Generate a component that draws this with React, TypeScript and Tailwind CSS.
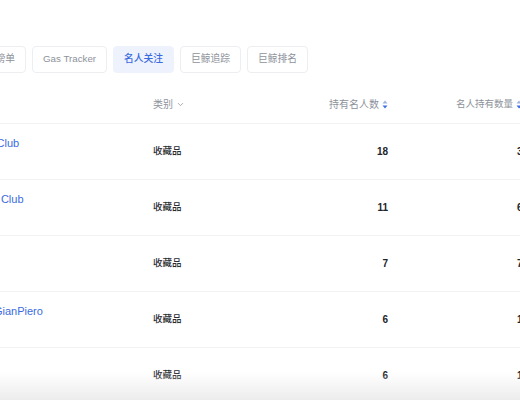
import { ChevronDown } from 'lucide-react';

const FONT = { fontFamily: '"Liberation Sans", "Noto Sans CJK SC", sans-serif' };

const tabs = [
  { label: '热门榜单', active: false },
  { label: 'Gas Tracker', active: false },
  { label: '名人关注', active: true },
  { label: '巨鲸追踪', active: false },
  { label: '巨鲸排名', active: false },
];

const rows = [
  { name: 'Bored Ape Yacht Club', sub: 'BAYC', category: '收藏品', holders: 18, amount: 35 },
  { name: 'Mutant Ape Yacht Club', sub: 'MAYC', category: '收藏品', holders: 11, amount: 62 },
  { name: 'Azuki', sub: 'AZUKI', category: '收藏品', holders: 7, amount: 71 },
  { name: 'Gutter Punks by GianPiero', sub: 'GP', category: '收藏品', holders: 6, amount: 14 },
  { name: 'Doodles', sub: 'DOODLE', category: '收藏品', holders: 6, amount: 12 },
];

function SortIcon() {
  return (
    <svg width="6" height="9" viewBox="0 0 6 9" className="ml-[3px] shrink-0">
      <path d="M3 0.5 L5.5 3.5 L0.5 3.5 Z" fill="#9fb2e4" />
      <path d="M3 8.5 L5.5 5.5 L0.5 5.5 Z" fill="#3f6fe0" />
    </svg>
  );
}

export default function App() {
  return (
    <div className="relative w-[520px] h-[400px] overflow-hidden bg-white" style={FONT}>
      {/* Tabs */}
      <div className="flex gap-[6px] mt-[46px] ml-[-35px]">
        {tabs.map(t => (
          <div
            key={t.label}
            className={`h-[27px] px-[10px] flex items-center rounded-[4px] text-[9.75px] whitespace-nowrap border ${t.active ? 'bg-[#edf2fd] border-[#edf2fd] text-[#3a6be0] font-medium' : 'bg-white border-[#eceef1] text-[#8d929b]'}`}
          >
            {t.label}
          </div>
        ))}
      </div>

      {/* Table */}
      <div className="mt-[12px] ml-[-100px] w-[628px]">
        <div className="flex items-center h-[39px] border-b border-[#f1f2f4] text-[10px] text-[#8d929b]">
          <div className="w-[253px] pl-[12px]">名称</div>
          <div className="w-[120px] flex items-center">
            类别
            <ChevronDown className="size-[9px] ml-[3px]" strokeWidth={2} />
          </div>
          <div className="w-[115px] flex items-center justify-end">
            持有名人数
            <SortIcon />
          </div>
          <div className="w-[140px] pr-[6px] flex items-center justify-end text-[9.5px]">
            名人持有数量
            <SortIcon />
          </div>
        </div>

        {rows.map(r => (
          <div key={r.name} className="flex items-center h-[56px] border-b border-[#f1f2f4]">
            <div className="w-[253px] pl-[12px] flex flex-col">
              <span className="text-[11px] leading-[17px] font-medium text-[#3b6be0] whitespace-nowrap">{r.name}</span>
              <span className="text-[9px] leading-[17px] text-[#9aa0a8]">{r.sub}</span>
            </div>
            <div className="w-[120px] text-[9.5px] font-medium text-[#2b2d31]">{r.category}</div>
            <div className="w-[115px] text-right text-[10px] font-bold text-[#222429]">{r.holders}</div>
            <div className="w-[140px] text-right text-[10px] font-bold text-[#222429]">{r.amount}</div>
          </div>
        ))}
      </div>

      {/* bottom fade */}
      <div className="absolute left-0 right-0 bottom-0 h-[28px] bg-gradient-to-b from-white/0 to-[#ececec]" />
    </div>
  );
}
